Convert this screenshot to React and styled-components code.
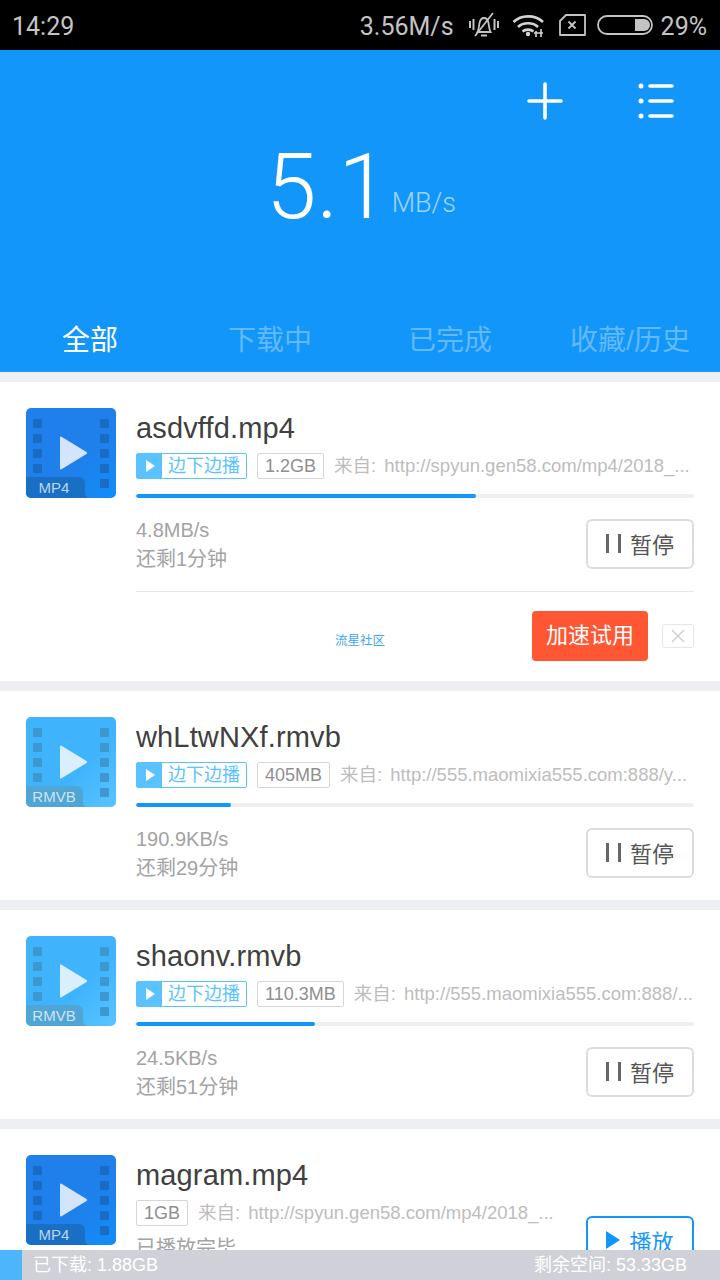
import styled, { createGlobalStyle } from 'styled-components';

const Global = createGlobalStyle`
  html, body {
    margin: 0;
    padding: 0;
    background: #eeeff2;
  }
  body {
    font-family: "Liberation Sans", "Noto Sans CJK SC", sans-serif;
  }
`;

const Page = styled.div`
  position: relative;
  width: 720px;
  height: 1280px;
  overflow: hidden;
  background: #eeeff2;
`;

const StatusBar = styled.div`
  height: 50px;
  background: #000;
  color: #c4c4c4;
  display: flex;
  align-items: center;
  justify-content: space-between;
  padding: 3px 13px 0 12px;
  box-sizing: border-box;
  font-size: 25px;
  font-family: Roboto, sans-serif;
  font-weight: 400;
`;

const StatusRight = styled.div`
  display: flex;
  align-items: center;
`;

const StatusIcon = styled.svg`
  display: block;
  margin-left: ${(p) => p.$gap}px;
  margin-top: -3px;
`;

const BatteryText = styled.span`
  margin-left: 8px;
`;

const Header = styled.header`
  height: 322px;
  background: #1296fa;
  display: flex;
  flex-direction: column;
  box-sizing: border-box;
`;

const HeaderActions = styled.div`
  display: flex;
  justify-content: flex-end;
  align-items: center;
  gap: 75px;
  padding: 32px 46px 0 0;
`;

const HeaderIcon = styled.svg`
  display: block;
`;

const Speed = styled.div`
  display: flex;
  align-items: flex-end;
  justify-content: center;
  color: #fff;
  margin-top: 15px;
  padding-left: 2px;
`;

const SpeedValue = styled.span`
  font-family: Roboto, sans-serif;
  font-weight: 300;
  font-size: 91px;
  line-height: 104px;
`;

const SpeedUnit = styled.span`
  font-family: Roboto, sans-serif;
  font-weight: 300;
  font-size: 27px;
  line-height: 30px;
  margin: 0 0 21px 3px;
  color: rgba(255, 255, 255, 0.6);
`;

const Tabs = styled.nav`
  display: grid;
  grid-template-columns: repeat(4, 180px);
  margin-top: auto;
  height: 66px;
`;

const Tab = styled.div`
  text-align: center;
  font-size: 28px;
  line-height: 70px;
  color: ${(p) => (p.$active ? '#fff' : 'rgba(255, 255, 255, 0.35)')};
`;

const List = styled.main`
  display: flex;
  flex-direction: column;
  gap: 10px;
  padding-top: 10px;
`;

const Card = styled.article`
  display: flex;
  background: #fff;
  padding: 26px 26px 22px;
  gap: 20px;
`;

const FileIcon = styled.svg`
  display: block;
  flex: none;
`;

const Body = styled.div`
  flex: 1;
  min-width: 0;
`;

const Title = styled.div`
  font-size: 29px;
  line-height: 40px;
  letter-spacing: 0.15px;
  color: #404040;
`;

const TagRow = styled.div`
  display: flex;
  align-items: center;
  height: 26px;
  margin-top: 5px;
`;

const PlayTag = styled.div`
  display: flex;
  width: 111px;
  height: 26px;
  box-sizing: border-box;
  border: 1px solid #5ac3ff;
  border-radius: 2px;
  margin-right: 10px;
  flex: none;
`;

const PlayTagIcon = styled.div`
  width: 25px;
  background: #5ac3ff;
  display: flex;
  align-items: center;
  justify-content: center;
`;

const PlayTagText = styled.div`
  flex: 1;
  text-align: center;
  color: #5ac3ff;
  font-size: 18px;
  line-height: 24px;
`;

const SizeTag = styled.div`
  height: 26px;
  box-sizing: border-box;
  border: 1px solid #d6d6d6;
  border-radius: 2px;
  color: #8f8f8f;
  font-size: 18px;
  line-height: 24px;
  padding: 0 7px;
  margin-right: 10px;
  flex: none;
`;

const Source = styled.div`
  flex: 1;
  min-width: 0;
  color: #bdbdbd;
  font-size: 18.500px;
  white-space: nowrap;
  overflow: hidden;
  margin-bottom: 5px;
`;

const SourceLabel = styled.span`
  margin-right: 3px;
`;

const Track = styled.div`
  height: 4px;
  margin-top: 15px;
  border-radius: 2px;
  background: #eeeff2;
  overflow: hidden;
`;

const Fill = styled.div`
  height: 100%;
  border-radius: 2px;
  background: #1296fa;
`;

const StatusRow = styled.div`
  display: flex;
  justify-content: space-between;
  height: 50px;
  margin-top: ${(p) => (p.$done ? -10 : 21)}px;
`;

const Stats = styled.div`
  color: #a3a3a3;
  font-size: 20px;
  line-height: 29px;
  margin-top: ${(p) => (p.$done ? 18 : -3)}px;
`;

const ActionButton = styled.div`
  width: 108px;
  height: 50px;
  box-sizing: border-box;
  border: 2px solid ${(p) => (p.$primary ? '#1296fa' : '#dcdcdc')};
  border-radius: 6px;
  color: ${(p) => (p.$primary ? '#1296fa' : '#555')};
  font-size: 22px;
  padding-bottom: 2px;
  display: flex;
  align-items: center;
  justify-content: center;
  gap: 9px;
  flex: none;
`;

const PauseBars = styled.span`
  display: block;
  width: 15px;
  height: 19px;
  border-left: 3px solid #666;
  border-right: 3px solid #666;
  box-sizing: border-box;
`;

const AdRow = styled.div`
  display: flex;
  align-items: center;
  border-top: 1px solid #e6e6e6;
  margin: 22px 0 -2px;
  padding-top: 19px;
`;

const AdLink = styled.div`
  flex: 1;
  text-align: center;
  font-size: 12.500px;
  color: #3ea6f5;
  padding: 7px 0 0 52px;
  box-sizing: border-box;
`;

const BoostButton = styled.div`
  width: 116px;
  height: 50px;
  line-height: 50px;
  text-align: center;
  background: #ff5733;
  border-radius: 4px;
  color: #fff;
  font-size: 22px;
  flex: none;
`;

const CloseButton = styled.div`
  width: 32px;
  height: 24px;
  margin-left: 14px;
  box-sizing: border-box;
  border: 1px solid #e6e6e6;
  border-radius: 3px;
  display: flex;
  align-items: center;
  justify-content: center;
  flex: none;
`;

const Footer = styled.footer`
  position: absolute;
  left: 0;
  right: 0;
  bottom: 0;
  height: 30px;
  display: flex;
  align-items: center;
  justify-content: space-between;
  background: #d0d0d8;
  color: #fff;
  font-size: 18px;
  line-height: 28px;
  padding: 0 33px 1px;
  box-sizing: border-box;
`;

const FooterFill = styled.div`
  position: absolute;
  left: 0;
  top: 0;
  bottom: 0;
  width: 22px;
  background: #4db5fa;
`;

const TypeIcon = ({ label, tabWidth, textX, from, to, hole, play, badge }) => (
  <FileIcon width="90" height="90" viewBox="0 0 90 90">
    <defs>
      <linearGradient id={`icon-${label}`} x1="0.2" y1="0.2" x2="1" y2="1">
        <stop offset="0.5" stopColor={from} />
        <stop offset="1" stopColor={to} />
      </linearGradient>
    </defs>
    <rect width="90" height="90" rx="5" fill={`url(#icon-${label})`} />
    {[11, 26, 41, 56].map((y) => (
      <rect key={y} x="7" y={y} width="9" height="9" rx="1" fill={hole} />
    ))}
    {[11, 26, 41, 56, 71].map((y) => (
      <rect key={y} x="74" y={y} width="9" height="9" rx="1" fill={hole} />
    ))}
    <path d="M34 29.500q0-1.500 1.500-.8L60.500 44q1.500 1 0 2L35.500 61.300q-1.500.7-1.500-.8z" fill={play} />
    <path d={`M0 69h${tabWidth - 6}a6 6 0 0 1 6 6v10q0 3 3 5H5a5 5 0 0 1-5-5z`} fill={badge} />
    <text
      x={textX}
      y="85"
      textAnchor="middle"
      fontSize="15"
      fontFamily="Liberation Sans, sans-serif"
      fill="rgba(255,255,255,.72)"
    >
      {label}
    </text>
  </FileIcon>
);

const Mp4Icon = () => (
  <TypeIcon label="MP4" tabWidth={59} textX={28} from="#1f80eb" to="#108ef8" hole="#1a6bc3" play="#d3e5fc" badge="#186fc4" />
);

const RmvbIcon = () => (
  <TypeIcon label="RMVB" tabWidth={57} textX={28} from="#3fb4fd" to="#5ac4ff" hole="#3d98cf" play="#d9effe" badge="#4fa5d3" />
);

const PlayBadge = () => (
  <PlayTagIcon>
    <svg width="10" height="14" viewBox="0 0 10 14">
      <path d="M1 1v12l9-6z" fill="#fff" />
    </svg>
  </PlayTagIcon>
);

const items = [
  {
    name: 'asdvffd.mp4',
    icon: <Mp4Icon />,
    size: '1.2GB',
    source: 'http://spyun.gen58.com/mp4/2018_...',
    progress: 340,
    speed: '4.8MB/s',
    left: '还剩1分钟',
    ad: true,
  },
  {
    name: 'whLtwNXf.rmvb',
    icon: <RmvbIcon />,
    size: '405MB',
    source: 'http://555.maomixia555.com:888/y...',
    progress: 95,
    speed: '190.9KB/s',
    left: '还剩29分钟',
  },
  {
    name: 'shaonv.rmvb',
    icon: <RmvbIcon />,
    size: '110.3MB',
    source: 'http://555.maomixia555.com:888/...',
    progress: 179,
    speed: '24.5KB/s',
    left: '还剩51分钟',
  },
];

const App = () => (
  <Page>
    <Global />
    <StatusBar>
      <span>14:29</span>
      <StatusRight>
        <span>3.56M/s</span>
        <StatusIcon $gap={15} width="30" height="26" viewBox="0 0 30 26" fill="none" stroke="#c4c4c4">
          <path d="M8.500 20c1.500-3 1.500-6 2-9 .6-3 2.500-5 4.500-5s4 2 4.500 5c.5 3 .5 6 2 9z" strokeWidth="1.800" />
          <path d="M12 23.500h6M24 1 6 24" strokeWidth="1.800" />
          <path d="M1 9v7M4.500 7v11M29 9v7M25.500 7v11" strokeWidth="2" />
        </StatusIcon>
        <StatusIcon $gap={13} width="34" height="26" viewBox="0 0 34 26" fill="none" stroke="#d4d4d4">
          <path d="M1.500 10C9 2.500 23 2.500 31 10M6 15c5-5 15-5 20 0M10.500 19.500c3-2.500 8-2.500 11 0" strokeWidth="2.600" />
          <circle cx="16" cy="22" r="2.200" fill="#d4d4d4" stroke="none" />
          <path d="M24 19v6M29 17v8M22 21h9" strokeWidth="1.600" />
        </StatusIcon>
        <StatusIcon $gap={13} width="27" height="22" viewBox="0 0 27 22" fill="none" stroke="#c4c4c4">
          <path d="M7 1h19v20H1V7z" strokeWidth="1.800" strokeLinejoin="round" />
          <path d="M9.500 7.500l7 7M16.500 7.500l-7 7" strokeWidth="1.800" />
        </StatusIcon>
        <StatusIcon $gap={11} width="56" height="20" viewBox="0 0 56 20" fill="none">
          <rect x="1" y="1" width="54" height="18" rx="9" stroke="#c4c4c4" strokeWidth="1.800" />
          <path d="M38 4h9a6 6 0 0 1 0 12h-9z" fill="#c4c4c4" />
        </StatusIcon>
        <BatteryText>29%</BatteryText>
      </StatusRight>
    </StatusBar>
    <Header>
      <HeaderActions>
        <HeaderIcon width="36" height="38" viewBox="0 0 36 38" fill="none" stroke="#fff" strokeWidth="3.600" strokeLinecap="round">
          <path d="M18 2v34M2 19h32" />
        </HeaderIcon>
        <HeaderIcon width="36" height="36" viewBox="0 0 36 36" fill="none" stroke="#fff" strokeWidth="3.600" strokeLinecap="round">
          <path d="M12 3h22M12 18h22M12 33h22" />
          <circle cx="3" cy="3" r="2.500" fill="#fff" stroke="none" />
          <circle cx="3" cy="18" r="2.500" fill="#fff" stroke="none" />
          <circle cx="3" cy="33" r="2.500" fill="#fff" stroke="none" />
        </HeaderIcon>
      </HeaderActions>
      <Speed>
        <SpeedValue>5.1</SpeedValue>
        <SpeedUnit>MB/s</SpeedUnit>
      </Speed>
      <Tabs>
        <Tab $active>全部</Tab>
        <Tab>下载中</Tab>
        <Tab>已完成</Tab>
        <Tab>收藏/历史</Tab>
      </Tabs>
    </Header>
    <List>
      {items.map((item) => (
        <Card key={item.name}>
          {item.icon}
          <Body>
            <Title>{item.name}</Title>
            <TagRow>
              <PlayTag>
                <PlayBadge />
                <PlayTagText>边下边播</PlayTagText>
              </PlayTag>
              <SizeTag>{item.size}</SizeTag>
              <Source>
                <SourceLabel>来自:</SourceLabel> {item.source}
              </Source>
            </TagRow>
            <Track>
              <Fill style={{ width: item.progress }} />
            </Track>
            <StatusRow>
              <Stats>
                {item.speed}
                <br />
                {item.left}
              </Stats>
              <ActionButton>
                <PauseBars />
                暂停
              </ActionButton>
            </StatusRow>
            {item.ad && (
              <AdRow>
                <AdLink>流星社区</AdLink>
                <BoostButton>加速试用</BoostButton>
                <CloseButton>
                  <svg width="14" height="14" viewBox="0 0 14 14" fill="none" stroke="#d0d0d0" strokeWidth="1.500">
                    <path d="M1 1l12 12M13 1 1 13" />
                  </svg>
                </CloseButton>
              </AdRow>
            )}
          </Body>
        </Card>
      ))}
      <Card>
        <Mp4Icon />
        <Body>
          <Title>magram.mp4</Title>
          <TagRow>
            <SizeTag>1GB</SizeTag>
            <Source>
              <SourceLabel>来自:</SourceLabel> http://spyun.gen58.com/mp4/2018_...
            </Source>
          </TagRow>
          <StatusRow $done>
            <Stats $done>已播放完毕</Stats>
            <ActionButton $primary>
              <svg width="14" height="18" viewBox="0 0 14 18">
                <path d="M0 0v18l14-9z" fill="#1296fa" />
              </svg>
              播放
            </ActionButton>
          </StatusRow>
        </Body>
      </Card>
    </List>
    <Footer>
      <FooterFill />
      <span>已下载: 1.88GB</span>
      <span>剩余空间: 53.33GB</span>
    </Footer>
  </Page>
);

export default App;
